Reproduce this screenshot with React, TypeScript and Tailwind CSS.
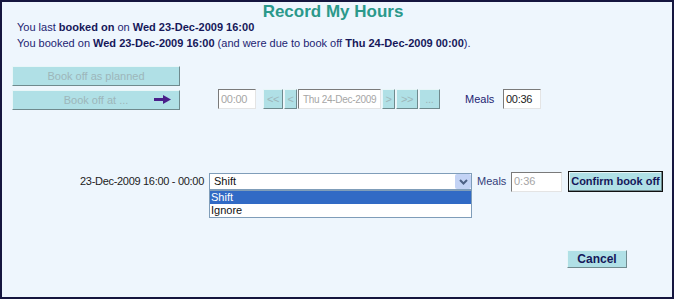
import React from "react";

const btn3d =
  "border border-t-[#e8f6f8] border-l-[#e8f6f8] border-b-[#6f8a8e] border-r-[#6f8a8e] bg-[#b0e0e6]";
const inset =
  "border border-t-[#7a7a7a] border-l-[#7a7a7a] border-b-[#e4e4e4] border-r-[#e4e4e4] bg-white";

function Arrow() {
  return (
    <svg width="17" height="9" viewBox="0 0 17 9">
      <rect x="0" y="3" width="10" height="3" fill="#4a1f8a" />
      <polygon points="9,0 17,4.5 9,9" fill="#4a1f8a" />
    </svg>
  );
}

export default function App() {
  return (
    <div
      className="relative w-[674px] h-[299px] border-2 border-[#15163f] bg-[#eef6fd] text-[11px] text-[#1d2472] overflow-hidden whitespace-nowrap"
      style={{ fontFamily: '"Liberation Sans", Arial, sans-serif' }}
    >
      <div className="h-[17px] pr-[8px] text-center text-[17px] font-bold leading-[20px] text-[#2b998b]">
        Record My Hours
      </div>
      <div className="pl-[15px] leading-[16px]">
        <div>
          You last <b className="text-[#16185a]">booked on</b> on{" "}
          <b className="text-[#16185a]">Wed 23-Dec-2009 16:00</b>
        </div>
        <div>
          You booked on <b className="text-[#16185a]">Wed 23-Dec-2009 16:00</b> (and were due to book off{" "}
          <b className="text-[#16185a]">Thu 24-Dec-2009 00:00</b>).
        </div>
      </div>

      <div className="mt-[15px] flex pl-[10px]">
        <div className="flex w-[168px] flex-col gap-[4px]">
          <div className={`${btn3d} flex h-[20px] items-center justify-center text-[#9db6ba]`}>
            Book off as planned
          </div>
          <div className={`${btn3d} relative flex h-[20px] items-center justify-center text-[#9db6ba]`}>
            Book off at ...
            <span className="absolute right-[8px] top-[4px]">
              <Arrow />
            </span>
          </div>
        </div>
        <div className="ml-[38px] mt-[23px] flex h-[20px] items-center tracking-[-0.3px]">
          <div className={`${inset} flex h-[20px] w-[38px] items-center pl-[2px] text-[#a6a6a6]`}>00:00</div>
          <div className="ml-[7px] flex h-[20px] items-center gap-[1px]">
            <div className={`${btn3d} flex h-[20px] w-[20px] items-center justify-center text-[#9db6ba]`}>&lt;&lt;</div>
            <div className={`${btn3d} flex h-[20px] w-[13px] items-center justify-center text-[#9db6ba]`}>&lt;</div>
            <div className={`${inset} flex h-[20px] w-[83px] items-center overflow-hidden pl-[4px] text-[10px] text-[#a6a6a6]`}>Thu 24-Dec-2009</div>
            <div className={`${btn3d} flex h-[20px] w-[13px] items-center justify-center text-[#9db6ba]`}>&gt;</div>
            <div className={`${btn3d} flex h-[20px] w-[22px] items-center justify-center text-[#9db6ba]`}>&gt;&gt;</div>
            <div className={`${btn3d} flex h-[20px] w-[21px] items-center justify-center text-[#9db6ba]`}>...</div>
          </div>
          <div className="ml-[25px] w-[38px] tracking-normal">Meals</div>
          <div className={`${inset} flex h-[20px] w-[38px] items-center pl-[2px] text-[#222]`}>00:36</div>
        </div>
      </div>

      <div className="mt-[61px] flex h-[21px] items-center pl-[78px]">
        <div className="w-[129px] pr-[7px] text-right tracking-[-0.3px] text-[#222]">23-Dec-2009 16:00 - 00:00</div>
        <div className="relative h-[17px] w-[263px]">
          <div className="flex h-[17px] w-[263px] items-center border border-[#7f9db9] bg-white pl-[4px] text-[#111]">
            Shift
            <div className="absolute right-[1px] top-[1px] flex h-[15px] w-[16px] items-center justify-center rounded-[2px] bg-[#c3d3f5]">
              <svg width="9" height="6" viewBox="0 0 9 6">
                <polyline points="1,1 4.5,4.5 8,1" fill="none" stroke="#4d6185" strokeWidth="2" />
              </svg>
            </div>
          </div>
          <div className="absolute left-0 top-[17px] w-[263px] border border-[#7f9db9] bg-white leading-[13px] text-[#111]">
            <div className="bg-[#316ac5] pl-[1px] text-white">Shift</div>
            <div className="pl-[1px]">Ignore</div>
          </div>
        </div>
        <div className="ml-[5px] w-[34px] text-[#34407a]">Meals</div>
        <div className={`${inset} flex h-[20px] w-[51px] items-center pl-[2px] text-[#a6a6a6]`}>0:36</div>
        <div className="ml-[6px] flex h-[21px] w-[95px] items-center justify-center border border-[#111] bg-[#b0e0e6] text-[11px] font-bold text-[#16185a] shadow-[inset_-1px_-1px_0_#6f8a8e,inset_1px_1px_0_#e8f6f8]">
          Confirm book off
        </div>
      </div>

      <div className="mt-[58px] pl-[565px]">
        <div className={`${btn3d} flex h-[18px] w-[60px] items-center justify-center text-[12px] font-bold text-[#16185a]`}>
          Cancel
        </div>
      </div>
    </div>
  );
}
